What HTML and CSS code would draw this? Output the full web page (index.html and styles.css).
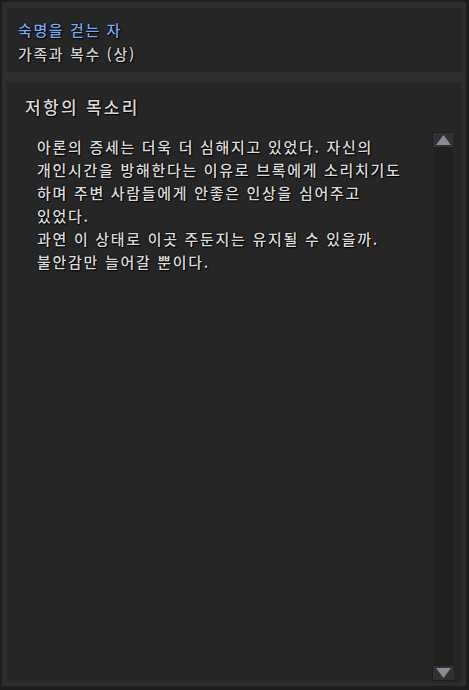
FILE: index.html
```html
<!DOCTYPE html>
<html lang="ko">
<head>
<meta charset="utf-8">
<link rel="stylesheet" href="styles.css">
</head>
<body>
<div class="frame">
  <section class="panel header">
    <div class="quest">숙명을 걷는 자</div>
    <div class="chapter">가족과 복수 (상)</div>
  </section>
  <section class="panel story">
    <h1 class="title">저항의 목소리</h1>
    <div class="content">
      <div class="text">
        <p>아론의 증세는 더욱 더 심해지고 있었다. 자신의<br>개인시간을 방해한다는 이유로 브록에게 소리치기도<br>하며 주변 사람들에게 안좋은 인상을 심어주고<br>있었다.<br>과연 이 상태로 이곳 주둔지는 유지될 수 있을까.<br>불안감만 늘어갈 뿐이다.</p>
      </div>
      <div class="scrollbar">
        <div class="btn up"><svg width="15" height="10" viewBox="0 0 15 10"><polygon points="7.5,0 15,10 0,10" fill="#8c8a96"/></svg></div>
        <div class="track"></div>
        <div class="btn down"><svg width="15" height="10" viewBox="0 0 15 10"><polygon points="0,0 15,0 7.5,10" fill="#8c8a96"/></svg></div>
      </div>
    </div>
  </section>
</div>
</body>
</html>
```
FILE: styles.css
```css
html, body {
  margin: 0;
  padding: 0;
  background: #1b1b1b;
}
.frame {
  box-sizing: border-box;
  width: 469px;
  height: 690px;
  background: #2d2d2d;
  border-style: solid;
  border-color: #1d1d1d;
  border-width: 2px 3px 4px 2px;
  padding: 6px 5px 4px 5px;
  display: flex;
  flex-direction: column;
  gap: 10px;
  font-family: "Noto Sans CJK KR", "Noto Sans", sans-serif;
  font-weight: 500;
}
.panel {
  background: #262626;
}
.header {
  height: 64px;
  box-sizing: border-box;
  padding: 10px 11px 0 11px;
  text-shadow: 1px 1px 1px #000, 0 0 2px #000;
}
.quest {
  color: #7aaaf0;
  font-size: 15px;
  line-height: 24px;
  letter-spacing: 1.6px;
}
.chapter {
  color: #d2d2d2;
  font-size: 15px;
  line-height: 24px;
  letter-spacing: 1.6px;
}
.story {
  flex: 1;
  min-height: 0;
  display: flex;
  flex-direction: column;
  padding: 13px 6px 1px 18px;
}
.title {
  margin: 0;
  font-size: 17px;
  font-weight: 500;
  line-height: 24px;
  color: #dadada;
  letter-spacing: 2.3px;
  text-shadow: 1px 1px 1px #000, 0 0 2px #000;
}
.content {
  flex: 1;
  min-height: 0;
  display: flex;
  margin-top: 13px;
}
.text {
  flex: 1;
  padding: 3px 0 0 12px;
}
.text p {
  margin: 0;
  font-size: 15px;
  line-height: 23px;
  color: #dcdcdc;
  letter-spacing: 1.7px;
  text-shadow: 1px 1px 1px #000, 0 0 2px #000;
}
.scrollbar {
  width: 23px;
  display: flex;
  flex-direction: column;
  align-items: center;
}
.btn {
  box-sizing: border-box;
  width: 23px;
  height: 16px;
  background: #313131;
  border: 1px solid #1e1e1e;
  display: flex;
  align-items: center;
  justify-content: center;
}
.track {
  flex: 1;
  width: 19px;
  background: #202020;
}
```
